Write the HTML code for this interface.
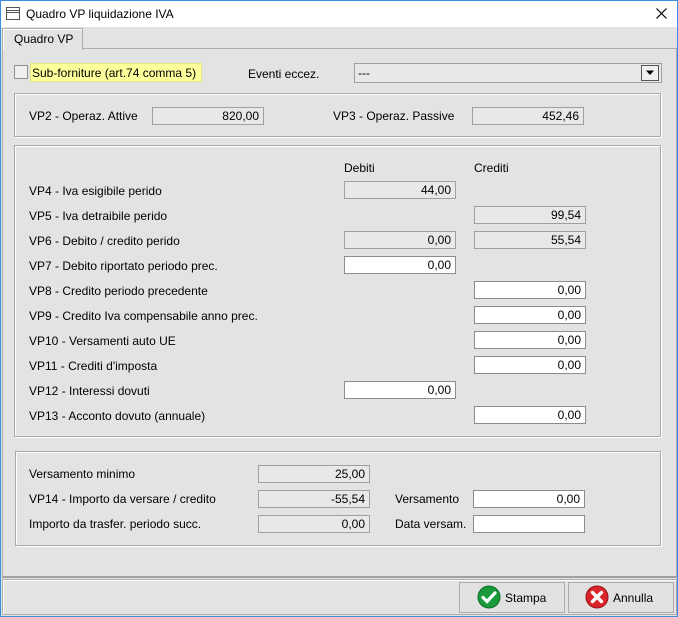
<!DOCTYPE html>
<html><head><meta charset="utf-8"><style>
*{margin:0;padding:0;box-sizing:border-box}
body{width:678px;height:617px;background:#e3e3e3;font-family:"Liberation Sans",sans-serif;font-size:12px;color:#000;position:relative;overflow:hidden}
.a{position:absolute}
.win{position:absolute;left:0;top:0;width:678px;height:617px;border:1px solid #3c8ddc;}
.title{position:absolute;left:1px;top:1px;width:676px;height:26px;background:#fff}
.grp{position:absolute;border:1px solid #a8a8a8;box-shadow:inset 1px 1px 0 #fff,1px 1px 0 #fff}
.f{position:absolute;height:18px;border:1px solid #a0a0a0;background:#e8e8e8;text-align:right;padding-right:4px;line-height:16px}
.w{background:#fff;border-color:#8c8c8c}
.l{position:absolute;line-height:14px}
.btn{position:absolute;top:582px;width:106px;height:31px;border:1px solid #adadad;background:#e1e1e1;font-size:12px}
</style></head><body>
<div class="title">
<svg class="a" style="left:5px;top:6px" width="14" height="13"><rect x="0.5" y="0.5" width="13" height="12" fill="#fff" stroke="#555"/><line x1="1" y1="3.5" x2="13" y2="3.5" stroke="#555"/><line x1="1" y1="5.5" x2="13" y2="5.5" stroke="#555"/></svg>
<div class="l" style="left:25px;top:6px">Quadro VP liquidazione IVA</div>
<svg class="a" style="left:655px;top:7px" width="11" height="11"><path d="M0.5 0.5L10.5 10.5M10.5 0.5L0.5 10.5" stroke="#000" stroke-width="1.2"/></svg>
</div>
<!-- tab panel -->
<div class="a" style="left:2px;top:48px;width:675px;height:530px;border:1px solid #adadad;border-bottom:2px solid #a0a0a0;background:#e3e3e3"></div>
<div class="a" style="left:2px;top:28px;width:81px;height:22px;border:1px solid #adadad;border-bottom:none;background:#e3e3e3;box-shadow:inset 1px 1px 0 #fff"></div>
<div class="l" style="left:14px;top:32px">Quadro VP</div>

<div class="a" style="left:30px;top:63px;width:172px;height:19px;background:#ffff9c;border:1px solid #e8e880"></div>
<div class="a" style="left:14px;top:65px;width:14px;height:14px;border:1px solid #8f8f8f;background:#f0f0f0"></div>
<div class="l" style="left:32px;top:66px">Sub-forniture (art.74 comma 5)</div>
<div class="l" style="left:248px;top:67px">Eventi eccez.</div>
<div class="a" style="left:354px;top:63px;width:308px;height:20px;border:1px solid #a0a0a0;background:#e8e8e8"></div>
<div class="l" style="left:358px;top:66px">---</div>
<div class="a" style="left:641px;top:65px;width:18px;height:16px;border:1px solid #555;background:#f0f0f0"></div>
<svg class="a" style="left:645px;top:70px" width="10" height="6"><path d="M1 0.5H9L5 5Z" fill="#000"/></svg>

<div class="grp" style="left:14px;top:93px;width:647px;height:44px"></div>
<div class="l" style="left:29px;top:109px">VP2 - Operaz. Attive</div>
<div class="f" style="left:152px;top:107px;width:112px">820,00</div>
<div class="l" style="left:333px;top:109px">VP3 - Operaz. Passive</div>
<div class="f" style="left:472px;top:107px;width:112px">452,46</div>

<div class="grp" style="left:14px;top:145px;width:647px;height:292px"></div>
<div class="l" style="left:344px;top:161px">Debiti</div>
<div class="l" style="left:474px;top:161px">Crediti</div>
<div class="l" style="left:29px;top:184px">VP4 - Iva esigibile perido</div>
<div class="f" style="left:344px;top:181px;width:112px">44,00</div>
<div class="l" style="left:29px;top:209px">VP5 - Iva detraibile perido</div>
<div class="f" style="left:474px;top:206px;width:112px">99,54</div>
<div class="l" style="left:29px;top:234px">VP6 - Debito / credito perido</div>
<div class="f" style="left:344px;top:231px;width:112px">0,00</div>
<div class="f" style="left:474px;top:231px;width:112px">55,54</div>
<div class="l" style="left:29px;top:259px">VP7 - Debito riportato periodo prec.</div>
<div class="f w" style="left:344px;top:256px;width:112px">0,00</div>
<div class="l" style="left:29px;top:284px">VP8 - Credito periodo precedente</div>
<div class="f w" style="left:474px;top:281px;width:112px">0,00</div>
<div class="l" style="left:29px;top:309px">VP9 - Credito Iva compensabile anno prec.</div>
<div class="f w" style="left:474px;top:306px;width:112px">0,00</div>
<div class="l" style="left:29px;top:334px">VP10 - Versamenti auto UE</div>
<div class="f w" style="left:474px;top:331px;width:112px">0,00</div>
<div class="l" style="left:29px;top:359px">VP11 - Crediti d'imposta</div>
<div class="f w" style="left:474px;top:356px;width:112px">0,00</div>
<div class="l" style="left:29px;top:384px">VP12 - Interessi dovuti</div>
<div class="f w" style="left:344px;top:381px;width:112px">0,00</div>
<div class="l" style="left:29px;top:409px">VP13 - Acconto dovuto (annuale)</div>
<div class="f w" style="left:474px;top:406px;width:112px">0,00</div>

<div class="grp" style="left:15px;top:451px;width:646px;height:95px"></div>
<div class="l" style="left:29px;top:467px">Versamento minimo</div>
<div class="f" style="left:258px;top:465px;width:112px">25,00</div>
<div class="l" style="left:29px;top:492px">VP14 - Importo da versare / credito</div>
<div class="f" style="left:258px;top:490px;width:112px">-55,54</div>
<div class="l" style="left:395px;top:492px">Versamento</div>
<div class="f w" style="left:473px;top:490px;width:112px">0,00</div>
<div class="l" style="left:29px;top:517px">Importo da trasfer. periodo succ.</div>
<div class="f" style="left:258px;top:515px;width:112px">0,00</div>
<div class="l" style="left:395px;top:517px">Data versam.</div>
<div class="f w" style="left:473px;top:515px;width:112px"></div>

<div class="a" style="left:2px;top:579px;width:675px;height:36px;border:1px solid #adadad;box-shadow:inset 1px 1px 0 #fff"></div>
<div class="btn" style="left:459px"></div>
<svg class="a" style="left:477px;top:585px" width="24" height="24"><circle cx="12" cy="12" r="11" fill="#1a9a3c"/><circle cx="12" cy="12" r="11" fill="none" stroke="#0d6b27"/><path d="M6 12.5L10 16.5L18 8" stroke="#fff" stroke-width="3.2" fill="none" stroke-linecap="round"/></svg>
<div class="l" style="left:505px;top:591px">Stampa</div>
<div class="btn" style="left:568px"></div>
<svg class="a" style="left:585px;top:585px" width="24" height="24"><circle cx="12" cy="12" r="11" fill="#d9252a"/><circle cx="12" cy="12" r="11" fill="none" stroke="#9a1015"/><path d="M7.5 7.5L16.5 16.5M16.5 7.5L7.5 16.5" stroke="#fff" stroke-width="3.4" stroke-linecap="round"/></svg>
<div class="l" style="left:613px;top:591px">Annulla</div>
<div class="win"></div>
</body></html>
